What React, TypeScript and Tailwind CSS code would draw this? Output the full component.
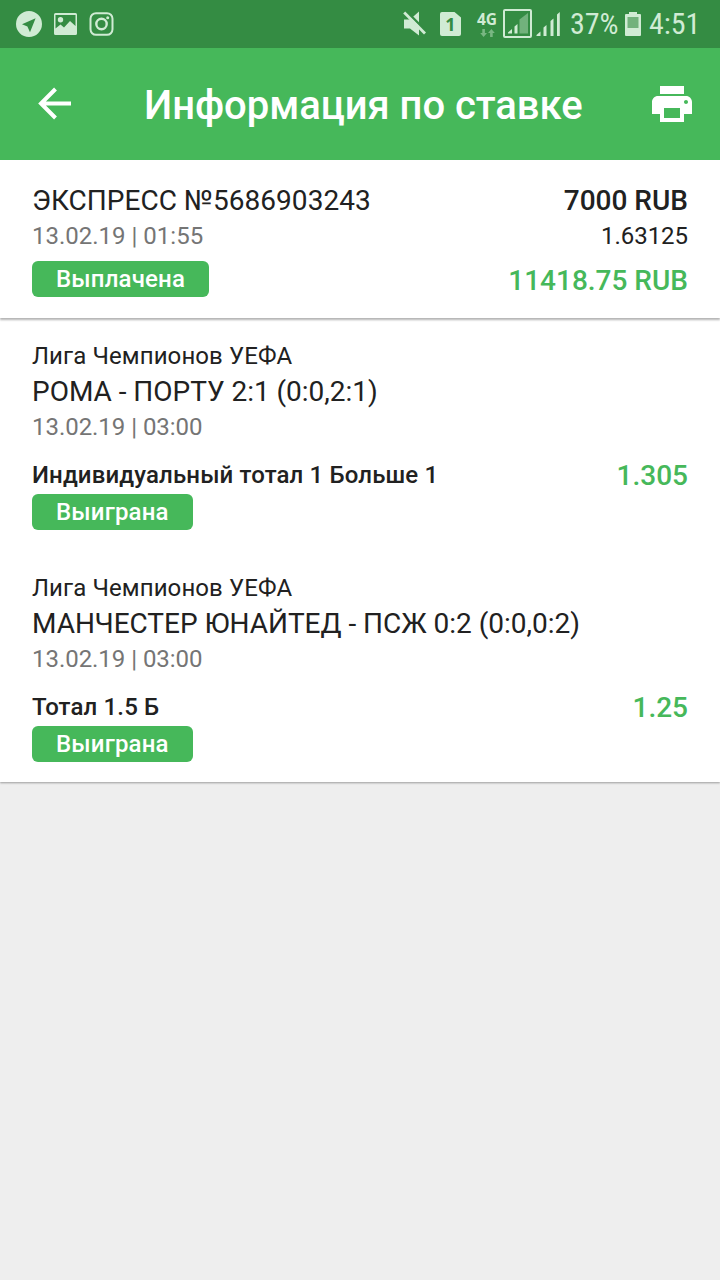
import React from 'react';

interface Bet {
  league: string;
  match: string;
  date: string;
  outcome: string;
  odds: string;
  status: string;
}

const bets: Bet[] = [
  {
    league: 'Лига Чемпионов УЕФА',
    match: 'РОМА - ПОРТУ 2:1 (0:0,2:1)',
    date: '13.02.19 | 03:00',
    outcome: 'Индивидуальный тотал 1 Больше 1',
    odds: '1.305',
    status: 'Выиграна',
  },
  {
    league: 'Лига Чемпионов УЕФА',
    match: 'МАНЧЕСТЕР ЮНАЙТЕД - ПСЖ 0:2 (0:0,0:2)',
    date: '13.02.19 | 03:00',
    outcome: 'Тотал 1.5 Б',
    odds: '1.25',
    status: 'Выиграна',
  },
];

const StatusBar = () => (
  <div className="h-12 bg-[#348c43] text-[#d0ebd4] flex items-center justify-between pl-4 pr-[21px]">
    {/* Notifications */}
    <div className="flex items-center">
      <svg width="26" height="26" viewBox="0 0 26 26" fill="currentColor">
        <path fillRule="evenodd" d="M13 0a13 13 0 1 0 0 26 13 13 0 0 0 0-26ZM19.6 7.2 6 13.3l5.4 2.2 2.6 5.8Z" />
      </svg>
      <svg className="ml-[11px]" width="25" height="24" viewBox="0 0 25 24" fill="currentColor">
        <path
          fillRule="evenodd"
          d="M2.5 1h20A1.5 1.5 0 0 1 24 2.500v19a1.500 1.500 0 0 1-1.500 1.500h-20A1.500 1.500 0 0 1 1 21.500v-19A1.500 1.500 0 0 1 2.500 1ZM2.500 3v13.500l5-4 3.500 3 6-6.500 5.500 5V3ZM7.500 5a2.700 2.700 0 1 1 0 5.400A2.700 2.700 0 0 1 7.500 5Z"
        />
      </svg>
      <svg className="ml-[11px]" width="25" height="24" viewBox="0 0 25 24" fill="none" stroke="currentColor" strokeWidth="2">
        <rect x="1.500" y="1.200" width="22" height="21.600" rx="5.500" />
        <circle cx="12.500" cy="12" r="5.200" strokeWidth="2.400" />
        <circle cx="18.700" cy="5.800" r="1.500" fill="currentColor" stroke="none" />
      </svg>
    </div>

    {/* System */}
    <div className="flex items-center">
      <svg width="24" height="26" viewBox="0 0 24 26">
        <path fill="currentColor" d="M1 8.500h6L16 .5v24L7 17.500H1Z" />
        <path d="M3 0 24 21" stroke="#348c43" strokeWidth="2.500" />
        <path d="M1.200 1.500 22 22.500" stroke="currentColor" strokeWidth="2.800" />
      </svg>
      <div className="relative ml-[13px] h-6 w-[21px]">
        <svg width="21" height="24" viewBox="0 0 21 24" fill="currentColor">
          <path d="M2 0h12.500L21 5.500V22a2 2 0 0 1-2 2H2a2 2 0 0 1-2-2V2a2 2 0 0 1 2-2Z" />
        </svg>
        <span className="absolute inset-0 text-center font-['Noto_Sans'] text-[18px] leading-[24px] font-bold text-[#348c43]">1</span>
      </div>
      <div className="ml-4 flex w-5 flex-col items-center">
        <span className="font-['Open_Sans'] text-[15.5px] leading-[15px] font-bold">4G</span>
        <svg className="mt-0.5" width="15" height="8" viewBox="0 0 15 8" fill="#79b783">
          <path d="M2.300 0h2.600v4H7L3.600 8 .2 4h2.100ZM10.100 8h2.600V4h2.100L11.400 0 8 4h2.100Z" />
        </svg>
      </div>
      <svg className="-mt-px ml-[6px]" width="29" height="29" viewBox="0 0 29 29">
        <rect x="1" y="1" width="27" height="27" rx="1" fill="none" stroke="currentColor" strokeWidth="2" />
        <path fill="#72b27c" d="M16.500 10.500 25 4v20.500h-8.500Z" />
        <path fill="currentColor" d="M5 24.500v-1l4-3.500v4.500ZM11.500 24.500V17.500l3-2.500v9.500Z" />
      </svg>
      <svg className="ml-[4px]" width="25" height="26" viewBox="0 0 25 26" fill="currentColor">
        <path d="M.5 25v-1l4-3.500V25ZM7.500 25v-8.500l3-2.500v11ZM14.500 25V10l3-2.500V25ZM21 25V3.500l2.800-2.500v24Z" />
      </svg>
      <span className="ml-[9px] w-[48px] font-stretch-[75%] text-[30px] leading-[50px] whitespace-nowrap">37%</span>
      <svg className="ml-[7px]" width="16" height="24" viewBox="0 0 16 24">
        <path fill="currentColor" d="M4 0h8v2h3a1 1 0 0 1 1 1v20a1 1 0 0 1-1 1H1a1 1 0 0 1-1-1V3a1 1 0 0 1 1-1h3Z" />
        <path fill="#72b27c" d="M2.500 5h11v11h-11Z" />
      </svg>
      <span className="ml-[8px] w-[50px] font-stretch-[75%] text-[30px] leading-[50px] whitespace-nowrap">4:51</span>
    </div>
  </div>
);

const StatusBadge: React.FC<{ label: string }> = ({ label }) => (
  <span className="block h-9 w-fit rounded-md bg-[#46b85a] px-6 text-2xl leading-9 font-medium tracking-[0.17px] text-white">
    {label}
  </span>
);

const BetItem: React.FC<{ bet: Bet }> = ({ bet }) => (
  <div className="px-8 pt-[21px] pb-5">
    <div className="text-2xl leading-[35px] tracking-[0.1px]">{bet.league}</div>
    <div className="text-[28px] leading-9 tracking-[-0.02px]">{bet.match}</div>
    <div className="-mt-px text-2xl leading-9 tracking-[-0.04px] text-[#757575]">{bet.date}</div>
    <div className="mt-3 flex h-9 items-start justify-between font-medium">
      <div className="text-2xl leading-9 tracking-[0.14px]">{bet.outcome}</div>
      <div className="text-[28px] leading-[38px] text-[#46b85a]">{bet.odds}</div>
    </div>
    <div className="mt-px">
      <StatusBadge label={bet.status} />
    </div>
  </div>
);

const App: React.FC = () => {
  return (
    <div className="flex h-[1280px] w-[720px] flex-col overflow-hidden bg-[#eeeeee] font-['Roboto',sans-serif] text-[#212121]">
      <StatusBar />

      {/* Toolbar */}
      <header className="flex h-28 items-center bg-[#46b85a] text-white">
        <button className="ml-[38px] w-[34px]">
          <svg width="34" height="34" viewBox="0 0 34 34" fill="none" stroke="currentColor" strokeWidth="4">
            <path d="M33 16.500H4M17.500 2 3 16.500 17.500 31" />
          </svg>
        </button>
        <h1 className="ml-[72px] flex-1 pt-[4px] text-[40px] leading-[48px] font-medium tracking-[-0.04px] whitespace-nowrap">
          Информация по ставке
        </h1>
        <button className="mr-7">
          <svg width="40" height="36" viewBox="0 0 20 18" fill="currentColor">
            <path d="M17 5H3C1.340 5 0 6.340 0 8v6h4v4h12v-4h4V8c0-1.660-1.340-3-3-3Zm-3 11H6v-5h8v5Zm3-7c-.550 0-1-.450-1-1s.450-1 1-1 1 .450 1 1-.450 1-1 1ZM16 0H4v4h12V0Z" />
          </svg>
        </button>
      </header>

      {/* Coupon summary */}
      <section className="relative flex h-[158px] items-start justify-between bg-white px-8 pt-[23px] shadow-[0_2px_2px_rgba(0,0,0,0.3)]">
        <div>
          <div className="text-[28px] leading-9 tracking-[0.05px]">ЭКСПРЕСС №5686903243</div>
          <div className="-mt-px mb-[7px] text-2xl leading-9 text-[#757575]">13.02.19 | 01:55</div>
          <StatusBadge label="Выплачена" />
        </div>
        <div className="text-right">
          <div className="text-[28px] leading-9 font-medium">7000 RUB</div>
          <div className="-mt-px text-2xl leading-9 tracking-[-0.04px]">1.63125</div>
          <div className="mt-[9px] text-[28px] leading-9 font-medium text-[#46b85a]">11418.75 RUB</div>
        </div>
      </section>

      {/* Events */}
      <section className="bg-white shadow-[0_1px_2px_rgba(0,0,0,0.35)]">
        {bets.map(bet => (
          <BetItem key={bet.match} bet={bet} />
        ))}
      </section>
    </div>
  );
};

export default App;
